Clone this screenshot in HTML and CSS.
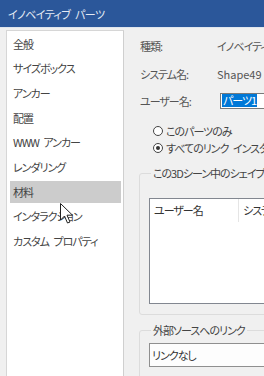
FILE: index.html
```html
<!DOCTYPE html>
<html lang="ja">
<head>
<meta charset="utf-8">
<title>イノベイティブ パーツ</title>
<link rel="stylesheet" href="styles.css">
</head>
<body>
<div class="titlebar">イノベイティブ パーツ</div>
<div class="main">
  <ul class="nav">
    <li>全般</li>
    <li>サイズボックス</li>
    <li>アンカー</li>
    <li>配置</li>
    <li>WWW アンカー</li>
    <li>レンダリング</li>
    <li class="selected">材料</li>
    <li>インタラクション</li>
    <li>カスタム プロパティ</li>
  </ul>
  <div class="content">
    <div class="props">
      <span class="label">種類:</span><span class="value">イノベイティブ パーツ</span>
      <span class="label">システム名:</span><span class="value latin">Shape49</span>
      <span class="label">ユーザー名:</span><span class="input"><span class="sel">パーツ1</span></span>
    </div>
    <div class="radios">
      <div class="radio"><span class="dot"></span>このパーツのみ</div>
      <div class="radio"><span class="dot checked"></span>すべてのリンク インスタンス</div>
    </div>
    <fieldset class="group g1">
      <legend>この3Dシーン中のシェイプへのリンク</legend>
      <div class="listview">
        <div class="lv-head"><span class="col c1">ユーザー名</span><span class="col c2">システム名</span></div>
      </div>
    </fieldset>
    <fieldset class="group g2">
      <legend>外部ソースへのリンク</legend>
      <div class="combo">リンクなし</div>
    </fieldset>
  </div>
</div>
<svg class="cursor" width="14" height="22" viewBox="0 0 14 22"><path d="M0.5 0.5 L0.5 17 L4.5 13 L7.5 20 L10 19 L7 12.2 L12.5 12.2 Z" fill="#fff" stroke="#222" stroke-width="1" stroke-linejoin="round"/></svg>
</body>
</html>
```
FILE: styles.css
```css
html, body { margin: 0; padding: 0; }
body {
  width: 264px;
  height: 376px;
  overflow: hidden;
  position: relative;
  background: #f0f0f0;
  font-family: "Noto Sans CJK JP", "Noto Sans", sans-serif;
  font-size: 11px;
  font-feature-settings: "palt";
  letter-spacing: -1px;
  word-spacing: 3px;
  color: #444;
}
.titlebar {
  box-sizing: border-box;
  height: 28px;
  padding: 2px 0 0 8px;
  line-height: 24px;
  background: #2b579a;
  color: #e4eaf4;
  border-bottom: 1px solid #dfe5ee;
  white-space: nowrap;
  letter-spacing: -0.6px;
}
.main {
  display: flex;
  align-items: flex-start;
  height: 348px;
}
.nav {
  list-style: none;
  box-sizing: border-box;
  flex: none;
  width: 118px;
  height: 360px;
  margin: 2px 0 0 6px;
  padding: 1.5px 2px 0 3px;
  background: #fff;
  border: 1px solid #d6d6d6;
  border-right-color: #cfcfcf;
}
.nav li {
  height: 22px;
  line-height: 22px;
  padding-left: 3px;
  margin-bottom: 2.7px;
  white-space: nowrap;
  color: #444;
}
.nav li.selected { background: #cccccc; }
.content {
  flex: 1;
  min-width: 0;
  height: 348px;
  box-sizing: border-box;
  padding: 4px 0 0 16px;
  overflow: hidden;
  white-space: nowrap;
}
.props {
  display: grid;
  grid-template-columns: 77px 200px;
  grid-template-rows: 28px 27px 28px;
  align-items: center;
}
.label { color: #555; }
.value { color: #555; }
.latin { letter-spacing: 0; }
.input {
  box-sizing: border-box;
  height: 16px;
  margin-left: 3px;
  padding-left: 1px;
  line-height: 13px;
  background: #fff;
  border: 1px solid #7a7a7a;
}
.sel {
  display: inline-block;
  background: #0078d7;
  color: #fff;
  padding: 0 1px;
  line-height: 13px;
}
.radios { margin: 7px 0 0 13px; }
.radio {
  height: 17px;
  display: flex;
  align-items: center;
  gap: 3px;
  color: #444;
}
.dot {
  box-sizing: border-box;
  flex: none;
  width: 10px;
  height: 10px;
  border-radius: 50%;
  border: 1px solid #444;
  background: #fff;
  display: flex;
  align-items: center;
  justify-content: center;
}
.dot.checked::after {
  content: "";
  width: 4px;
  height: 4px;
  border-radius: 50%;
  background: #333;
}
.group {
  box-sizing: border-box;
  width: 170px;
  min-width: 0;
  margin: 10px 0 0 -1px;
  border: 1px solid #dcdcdc;
  border-radius: 3px;
}
.group legend {
  padding: 0 2px;
  margin-left: 2px;
  line-height: 14px;
  color: #444;
}
.g1 { padding: 18px 0 10px 9px; }
.g2 { margin-top: 8px; padding: 6px 0 40px 9px; }
.listview {
  box-sizing: border-box;
  width: 200px;
  height: 106px;
  background: #fff;
  border: 1px solid #828790;
}
.lv-head {
  display: flex;
  height: 23px;
  line-height: 22px;
}
.col { padding-left: 4px; color: #333; }
.c1 {
  box-sizing: border-box;
  width: 89px;
  border-right: 1px solid #e5e5e5;
}
.combo {
  box-sizing: border-box;
  width: 200px;
  height: 24px;
  line-height: 22px;
  padding-left: 2px;
  background: #fdfdfd;
  border: 1px solid #8f8f8f;
  color: #333;
}
.cursor {
  position: absolute;
  left: 60px;
  top: 203px;
}
```
